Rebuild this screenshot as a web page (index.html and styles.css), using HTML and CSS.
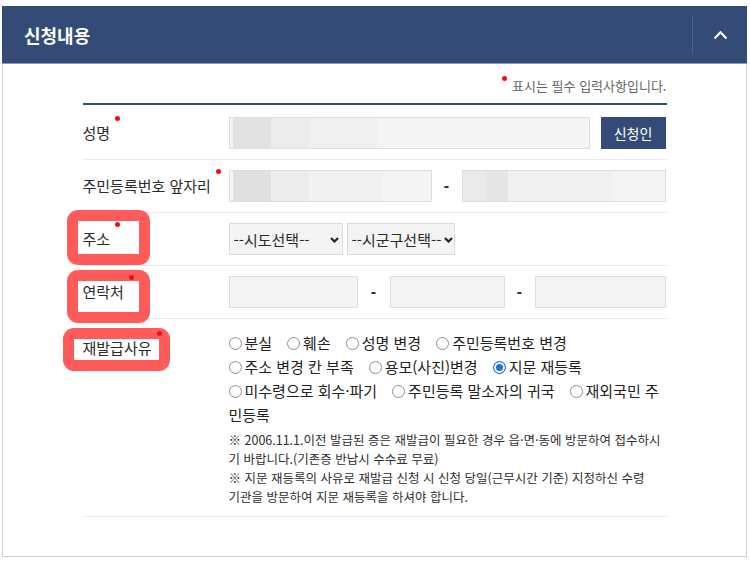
FILE: index.html
```html
<!DOCTYPE html>
<html lang="ko">
<head>
<meta charset="utf-8">
<title>신청내용</title>
<link rel="stylesheet" href="styles.css">
</head>
<body>
<section class="panel">
  <header class="panel-head">
    <h2 class="panel-title">신청내용</h2>
    <button class="toggle" type="button" aria-label="접기">
      <svg width="15" height="10" viewBox="0 0 15 10"><path d="M1.5 8.5 L7.5 2.2 L13.5 8.5" fill="none" stroke="#fff" stroke-width="2"/></svg>
    </button>
  </header>
  <div class="panel-body">
    <div class="wrap">
      <p class="req-note"><span class="dot dot-note"></span>표시는 필수 입력사항입니다.</p>
      <div class="form">
        <div class="row row-first">
          <div class="label">성명<span class="dot"></span></div>
          <div class="field">
            <input class="inp w-name blur-name" type="text" aria-label="성명">
            <button class="btn" type="button">신청인</button>
          </div>
        </div>
        <div class="row">
          <div class="label">주민등록번호 앞자리<span class="dot"></span></div>
          <div class="field">
            <input class="inp w-rrn blur-rrn1" type="text" aria-label="주민등록번호 앞자리">
            <span class="dash dash-rrn">-</span>
            <input class="inp w-rrn2 blur-rrn2" type="text" aria-label="주민등록번호 뒷자리">
          </div>
        </div>
        <div class="row">
          <div class="label">주소<span class="dot"></span></div>
          <div class="field">
            <span class="sel sel-sido">
              <select aria-label="시도"><option>--시도선택--</option></select>
              <svg width="9" height="6" viewBox="0 0 9 6"><path d="M1 1 L4.5 4.5 L8 1" fill="none" stroke="#222" stroke-width="2.2"/></svg>
            </span>
            <span class="sel sel-sigungu">
              <select aria-label="시군구"><option>--시군구선택--</option></select>
              <svg width="9" height="6" viewBox="0 0 9 6"><path d="M1 1 L4.5 4.5 L8 1" fill="none" stroke="#222" stroke-width="2.2"/></svg>
            </span>
          </div>
        </div>
        <div class="row">
          <div class="label">연락처<span class="dot"></span></div>
          <div class="field">
            <input class="inp w-tel1" type="text" aria-label="연락처 1">
            <span class="dash dash-tel1">-</span>
            <input class="inp w-tel2" type="text" aria-label="연락처 2">
            <span class="dash dash-tel2">-</span>
            <input class="inp w-tel3" type="text" aria-label="연락처 3">
          </div>
        </div>
        <div class="row row-reason">
          <div class="label label-top">재발급사유<span class="dot"></span></div>
          <div class="field field-col">
            <div class="opt-line"><label class="opt"><input type="radio" name="reason"><span>분실</span></label><label class="opt"><input type="radio" name="reason"><span>훼손</span></label><label class="opt"><input type="radio" name="reason"><span>성명 변경</span></label><label class="opt"><input type="radio" name="reason"><span>주민등록번호 변경</span></label></div>
            <div class="opt-line"><label class="opt"><input type="radio" name="reason"><span>주소 변경 칸 부족</span></label><label class="opt"><input type="radio" name="reason"><span>용모(사진)변경</span></label><label class="opt"><input type="radio" name="reason" checked><span>지문 재등록</span></label></div>
            <div class="opt-line"><label class="opt"><input type="radio" name="reason"><span>미수령으로 회수·파기</span></label><label class="opt"><input type="radio" name="reason"><span>주민등록 말소자의 귀국</span></label><label class="opt opt-wrap"><input type="radio" name="reason"><span>재외국민 주민등록</span></label></div>
            <p class="notice">※ 2006.11.1.이전 발급된 증은 재발급이 필요한 경우 읍·면·동에 방문하여 접수하시<br>기 바랍니다.(기존증 반납시 수수료 무료)</p>
            <p class="notice">※ 지문 재등록의 사유로 재발급 신청 시 신청 당일(근무시간 기준) 지정하신 수령<br>기관을 방문하여 지문 재등록을 하셔야 합니다.</p>
          </div>
        </div>
        <div class="mark mark-addr" aria-hidden="true"></div>
        <div class="mark mark-tel" aria-hidden="true"></div>
        <div class="mark mark-reason" aria-hidden="true"></div>
      </div>
    </div>
  </div>
</section>
</body>
</html>
```

FILE: styles.css
```css
* { box-sizing: border-box; }
html, body { margin: 0; padding: 0; background: #fff; }
body {
  width: 750px;
  height: 561px;
  overflow: hidden;
  font-family: "Noto Sans CJK KR", "Noto Sans", sans-serif;
  color: #333;
}

.panel { width: 745px; margin: 6px 0 0 2px; }

.panel-head {
  height: 58px;
  background: #344b78;
  border-bottom: 1px solid #8899bb;
  display: flex;
  align-items: center;
  justify-content: space-between;
}
.panel-title {
  margin: 0 0 0 22px;
  font-size: 18px;
  font-weight: 700;
  line-height: 24px;
  color: #fff;
}
.toggle {
  width: 55px;
  height: 39px;
  padding: 0;
  border: 0;
  border-left: 1px solid #4c618a;
  background: transparent;
  display: flex;
  align-items: center;
  justify-content: center;
}

.panel-body {
  height: 493px;
  border: 1px solid #cfcfcf;
  border-top: 0;
}
.wrap { width: 584px; margin: 0 auto; }

.req-note {
  margin: 0 0 8px;
  padding-top: 13px;
  text-align: right;
  font-size: 13px;
  line-height: 18px;
  color: #666;
}

.dot {
  display: inline-block;
  width: 5px;
  height: 5px;
  border-radius: 50%;
  background: #ee1111;
  vertical-align: top;
  margin-left: 5px;
  position: relative;
  top: -7px;
  z-index: 2;
}
.dot-note { margin: 0 5px 0 0; top: -1px; }

.form { position: relative; border-top: 2px solid #344b78; }

.row {
  display: flex;
  align-items: center;
  padding: 10px 0;
  border-bottom: 1px solid #e8e8e8;
}
.row-first { padding-top: 12px; }
.row-reason { align-items: flex-start; padding-top: 12px; }

.label {
  width: 146px;
  flex: none;
  font-size: 15px;
  line-height: 20px;
  color: #2a2a2a;
}
.label-top { margin-top: 7px; }

.field { width: 437px; display: flex; align-items: center; }
.field-col { display: block; }

.inp {
  height: 32px;
  border: 1px solid #dddddd;
  background: #f4f4f4;
  padding: 0 8px;
  font: inherit;
  font-size: 14px;
  flex: none;
}
.w-name { width: 361px; }
.w-rrn { width: 203px; }
.w-rrn2 { width: 204px; }
.w-tel1 { width: 129px; }
.w-tel2 { width: 115px; }
.w-tel3 { width: 131px; }

.blur-name {
  background: linear-gradient(to right, transparent 3px, #e2e2e2 3px, #e2e2e2 41px, #ececec 41px, #ececec 79px, #f0f0f0 79px, #f0f0f0 147px, transparent 147px), #f4f4f4;
}
.blur-rrn1 {
  background: linear-gradient(to right, transparent 3px, #e0e0e0 3px, #e0e0e0 41px, #ececec 41px, #ececec 79px, #f1f1f1 79px, #f1f1f1 153px, transparent 153px), #f5f5f5;
}
.blur-rrn2 {
  background: linear-gradient(to right, #eaeaea 0, #eaeaea 22px, #e5e6e6 22px, #e5e6e6 45px, #f1f1f1 45px, #f1f1f1 149px, transparent 149px), #f5f5f5;
}

.btn {
  width: 65px;
  height: 32px;
  margin-left: 11px;
  border: 0;
  background: #344b78;
  color: #fff;
  font: inherit;
  font-size: 14px;
  flex: none;
  padding: 0;
}

.dash {
  flex: none;
  text-align: center;
  font-family: "Liberation Sans", sans-serif;
  font-weight: 700;
  font-size: 16px;
  color: #333;
}
.dash-rrn { width: 30px; }
.dash-tel1 { width: 32px; }
.dash-tel2 { width: 30px; }

.sel { position: relative; display: inline-block; flex: none; }
.sel select {
  appearance: none;
  -webkit-appearance: none;
  height: 32px;
  border: 1px solid #dcdcdc;
  background: #f4f4f4;
  font: inherit;
  font-size: 15px;
  color: #2a2a2a;
  padding: 0 0 0 4px;
  border-radius: 0;
  display: block;
}
.sel-sido select { width: 114px; }
.sel-sigungu { margin-left: 4px; }
.sel-sigungu select { width: 108px; }
.sel svg { position: absolute; top: 14px; pointer-events: none; }
.sel-sido svg { right: 4px; }
.sel-sigungu svg { right: 2px; }

.opt-line { font-size: 15px; line-height: 24px; color: #222; }
.opt { margin-right: 15px; white-space: nowrap; }
.opt:last-child { margin-right: 0; }
.opt-wrap { white-space: normal; }
.opt input {
  appearance: none;
  -webkit-appearance: none;
  display: inline-block;
  width: 13px;
  height: 13px;
  margin: 0 3px 0 0;
  border: 1px solid #8e8e8e;
  border-radius: 50%;
  background: #fff;
  vertical-align: -1px;
}
.opt input:checked {
  border-color: #1a6fe0;
  background: #1a6fe0;
  box-shadow: inset 0 0 0 2px #fff;
}

.notice {
  margin: 0;
  font-size: 12.5px;
  line-height: 19px;
  color: #2e2e2e;
  white-space: nowrap;
}
.opt-line + .notice { margin-top: 3px; }

.mark {
  position: absolute;
  border: 11px solid #ff5b5b;
  border-radius: 11px;
  z-index: 1;
  pointer-events: none;
}
.mark-addr { left: -16px; top: 105px; width: 83px; height: 55px; }
.mark-tel { left: -16px; top: 165px; width: 83px; height: 53px; }
.mark-reason { left: -20px; top: 223px; width: 107px; height: 43px; }
```
